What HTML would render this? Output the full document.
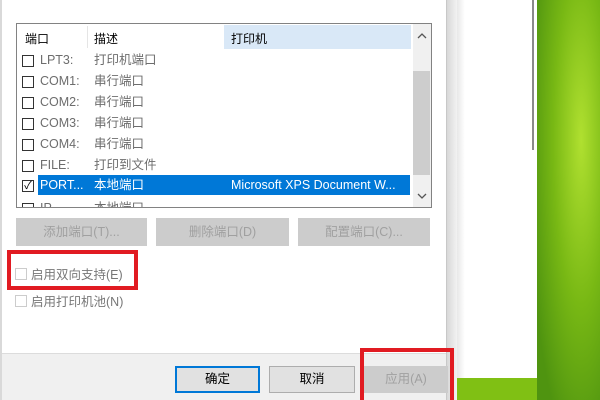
<!DOCTYPE html><html><head><meta charset="utf-8"><style>
*{margin:0;padding:0;box-sizing:border-box}
body{width:600px;height:400px;overflow:hidden;position:relative;font-family:"Liberation Sans","Noto Sans CJK SC",sans-serif;font-size:12px;
background:linear-gradient(160deg,#8cc820 0%,#6aa812 30%,#9bd41a 55%,#5c9a10 75%,#8cc61c 100%)}
.a{position:absolute}
.cb{position:absolute;width:12px;height:12px;border:1px solid #333;background:#fff}
.row{position:absolute;left:20px;width:390px;height:21px;line-height:21px;color:#6d6d6d;font-size:12.5px}
.row span{position:absolute}
.btn{position:absolute;height:28px;background:#cccccc;color:#a0a0a0;text-align:center;line-height:28px;font-size:12.5px}
</style></head><body>
<div class="a" style="left:537px;top:0;width:63px;height:400px;background:radial-gradient(ellipse at 70% 35%,#b0e030,#78b814 45%,#4f9410 85%)"></div>
<div class="a" style="left:447px;top:0;width:10px;height:400px;background:linear-gradient(90deg,#d8d8d8,#f2f2f2)"></div>
<div class="a" style="left:457px;top:0;width:80px;height:378px;background:linear-gradient(90deg,#e8e8e8,#fff 8px)"></div>
<div class="a" style="left:532px;top:0;width:2px;height:150px;background:#8a8a8a"></div>
<div class="a" style="left:457px;top:378px;width:80px;height:22px;background:#80c014"></div>
<div class="a" style="left:0;top:0;width:447px;height:400px;background:#f0f0f0;border-left:2px solid #d9d9d9;border-right:1px solid #c8c8c8"></div>
<div class="a" style="left:2px;top:0;width:444px;height:354px;background:#fff;border-bottom:1px solid #dcdcdc"></div>
<div class="a" style="left:16px;top:23px;width:416px;height:185px;border:1px solid #828282;background:#fff;overflow:hidden">
 <div class="a" style="left:70px;top:2px;width:1px;height:22px;background:#e5e5e5"></div>
 <div class="a" style="left:207px;top:1px;width:187px;height:24px;background:#d9e8f7"></div>
 <div class="a" style="left:8px;top:6px;color:#000">端口</div>
 <div class="a" style="left:77px;top:6px;color:#000">描述</div>
 <div class="a" style="left:214px;top:6px;color:#000">打印机</div>
 <div class="a" style="left:396px;top:0;width:18px;height:183px;background:#f0f0f0"></div>
 <div class="a" style="left:396px;top:47px;width:17px;height:104px;background:#cdcdcd"></div>
 <svg class="a" style="left:400px;top:8px" width="10" height="8"><path d="M1 6 L5 2 L9 6" stroke="#555" fill="none" stroke-width="1.3"/></svg>
 <svg class="a" style="left:400px;top:168px" width="10" height="8"><path d="M1 2 L5 6 L9 2" stroke="#555" fill="none" stroke-width="1.3"/></svg>
</div>
<div class="row" style="top:50px"><div class="cb" style="left:2px;top:5px"></div><span style="left:20px">LPT3:</span><span style="left:74px">打印机端口</span></div>
<div class="row" style="top:71px"><div class="cb" style="left:2px;top:5px"></div><span style="left:20px">COM1:</span><span style="left:74px">串行端口</span></div>
<div class="row" style="top:92px"><div class="cb" style="left:2px;top:5px"></div><span style="left:20px">COM2:</span><span style="left:74px">串行端口</span></div>
<div class="row" style="top:113px"><div class="cb" style="left:2px;top:5px"></div><span style="left:20px">COM3:</span><span style="left:74px">串行端口</span></div>
<div class="row" style="top:134px"><div class="cb" style="left:2px;top:5px"></div><span style="left:20px">COM4:</span><span style="left:74px">串行端口</span></div>
<div class="row" style="top:155px"><div class="cb" style="left:2px;top:5px"></div><span style="left:20px">FILE:</span><span style="left:74px">打印到文件</span></div>
<div class="a" style="left:38px;top:175px;width:372px;height:20px;background:#0078d7"></div>
<div class="row" style="top:175px;color:#fff"><div class="cb" style="left:2px;top:5px;color:#000;font-size:11px;line-height:10px;text-align:center">✓</div><span style="left:20px">PORT...</span><span style="left:74px">本地端口</span><span style="left:211px">Microsoft XPS Document W...</span></div>
<div class="a" style="left:17px;top:198px;width:395px;height:9px;overflow:hidden"><div class="row" style="left:3px;top:0"><div class="cb" style="left:2px;top:5px"></div><span style="left:20px">IP</span><span style="left:74px">本地端口</span></div></div>
<div class="btn" style="left:16px;top:218px;width:131px">添加端口(T)...</div>
<div class="btn" style="left:156px;top:218px;width:133px">删除端口(D)</div>
<div class="btn" style="left:298px;top:218px;width:132px">配置端口(C)...</div>
<div class="cb" style="left:15px;top:268px;border-color:#ccc"></div>
<div class="a" style="left:31px;top:264px;color:#777;font-size:12.5px">启用双向支持(E)</div>
<div class="a" style="left:7px;top:250px;width:131px;height:40px;border:4px solid #e11b22"></div>
<div class="cb" style="left:15px;top:295px;border-color:#ccc"></div>
<div class="a" style="left:31px;top:291px;color:#777;font-size:12.5px">启用打印机池(N)</div>
<div class="a" style="left:175px;top:366px;width:85px;height:27px;border:2px solid #0078d7;background:#e1e1e1;text-align:center;line-height:23px;font-size:12.5px">确定</div>
<div class="a" style="left:269px;top:366px;width:86px;height:27px;border:1px solid #adadad;background:#e1e1e1;text-align:center;line-height:25px;font-size:12.5px">取消</div>
<div class="a" style="left:364px;top:366px;width:84px;height:27px;background:#cccccc;color:#a0a0a0;text-align:center;line-height:27px;font-size:12.5px">应用(A)</div>
<div class="a" style="left:360px;top:348px;width:94px;height:52px;border:4px solid #e11b22;border-bottom:none"></div>
</body></html>
